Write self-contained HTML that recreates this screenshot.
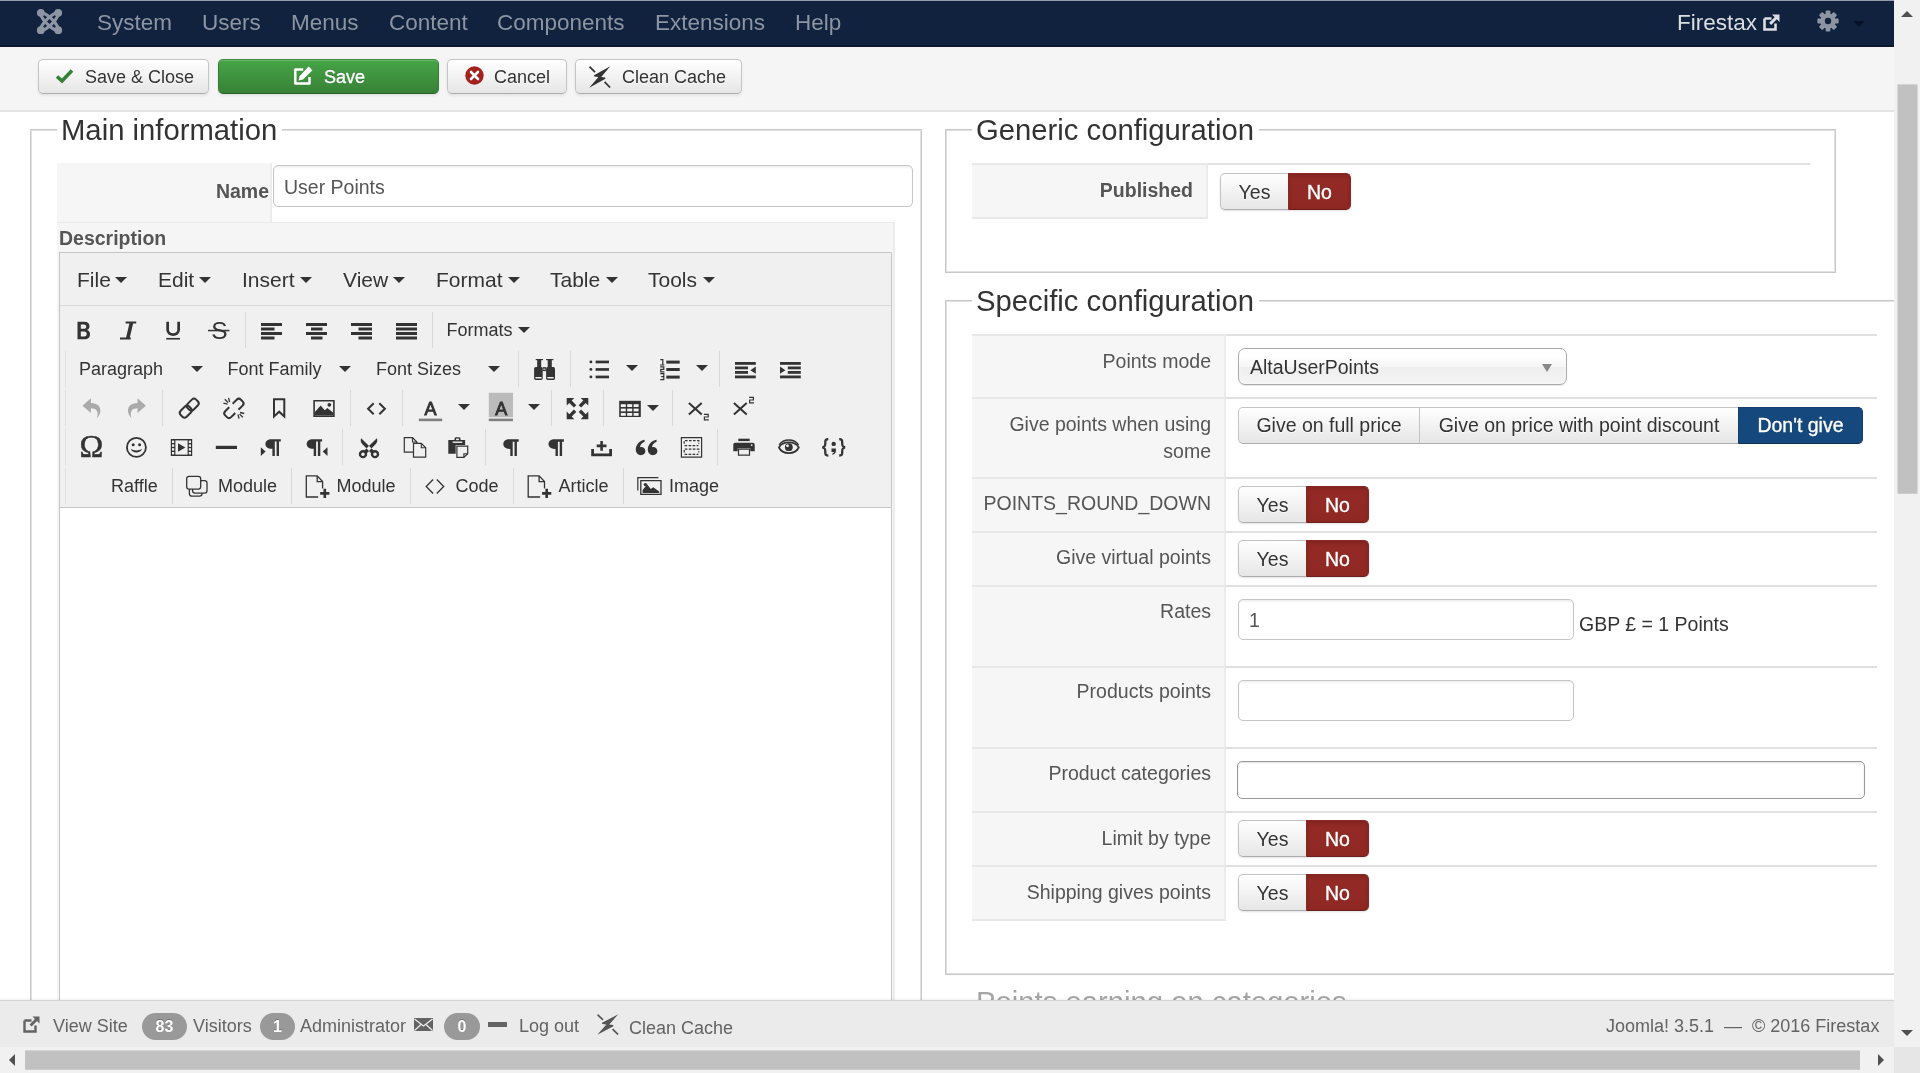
<!DOCTYPE html>
<html lang="en"><head><meta charset="utf-8"><title>User Points</title>
<style>
html,body{margin:0;padding:0;}
body{width:1920px;height:1073px;overflow:hidden;background:#fff;font-family:"Liberation Sans",sans-serif;font-size:19.5px;line-height:27px;color:#333;position:relative;}
*{box-sizing:border-box;}
.abs{position:absolute;}
#page{position:absolute;left:0;top:0;width:1894px;height:1047px;overflow:hidden;background:#fff;will-change:transform;}
#nav{position:absolute;left:0;top:0;width:1894px;height:47px;background:#10223e;border-top:1px solid #959dab;border-bottom:2px solid #0b1830;}
#nav .mi{position:absolute;top:8px;font-size:22.5px;line-height:27px;color:#8d94a2;white-space:nowrap;}
#nav .brand{position:absolute;top:8px;left:1677px;font-size:22.5px;line-height:27px;color:#dcdee2;white-space:nowrap;}
#tb{position:absolute;left:0;top:47px;width:1894px;height:65px;background:#f5f5f5;border-bottom:2px solid #e4e4e4;}
.btn{position:absolute;border:1px solid #bbb;border-color:#c4c4c4 #c4c4c4 #adadad;border-radius:5px;background:linear-gradient(#ffffff,#e6e6e6);box-shadow:inset 0 1px 0 rgba(255,255,255,.2),0 1.5px 3px rgba(0,0,0,.07);color:#333;text-shadow:0 1px 1px rgba(255,255,255,.75);white-space:nowrap;}
.btn-s{font-size:18px;line-height:27px;height:35px;top:12px;}
.btn .t{position:absolute;top:4px;}
.btn-green{background:linear-gradient(#46a546,#378137);border-color:#3d8b3d #357a35 #2a5f2a;color:#fff;text-shadow:0 -1px 0 rgba(0,0,0,.25);-webkit-text-stroke:0.35px #fff;}
.fs{position:absolute;border:1px solid #c8c8c8;box-shadow:inset 0 0 0 1px #e2e2e2;}
.lg{position:absolute;background:#fff;font-size:29.25px;line-height:36px;color:#333;white-space:nowrap;padding:0 5px 0 4px;}
.lab{position:absolute;background:#f6f6f6;border-right:2px solid #ececec;border-top:2px solid #e8e8e8;color:#555;text-align:right;}
.lab span{position:absolute;right:13px;display:block;}
.hl{position:absolute;height:2px;background:#e0e0e0;}
.yn{position:absolute;height:37px;width:131px;border-radius:5px;box-shadow:0 1px 2px rgba(0,0,0,.12);}
.yn .y,.yn .n,.seg{position:absolute;top:0;height:37px;font-size:19.5px;line-height:36px;text-align:center;border:1px solid #c4c4c4;white-space:nowrap;}
.yn .y{left:0;width:69px;border-radius:5px 0 0 5px;background:linear-gradient(#ffffff,#e6e6e6);border-color:#c4c4c4 #c4c4c4 #adadad;color:#333;text-shadow:0 1px 1px rgba(255,255,255,.75);}
.yn .n{left:68px;width:63px;border-radius:0 5px 5px 0;background:linear-gradient(#942a25,#8f2823);border-color:#8a2722 #8a2722 #6d1f1b;color:#fff;text-shadow:0 -1px 0 rgba(0,0,0,.25);box-shadow:inset 0 2px 4px rgba(0,0,0,.15);-webkit-text-stroke:0.35px #fff;}
.inp{position:absolute;background:#fff;border:1px solid #c6c6c6;border-radius:5px;box-shadow:inset 0 1.5px 1.5px rgba(0,0,0,.075);color:#555;}
.ed{position:absolute;background:#f0f0f0;border:1px solid #c5c5c5;}
.ed .m{position:absolute;font-size:21px;line-height:24px;color:#333;white-space:nowrap;}
.car{position:absolute;width:0;height:0;border-left:6px solid transparent;border-right:6px solid transparent;border-top:6.5px solid #333;}
.sep{position:absolute;width:1px;height:36px;background:#d9d9d9;}
.tt{position:absolute;font-size:18px;line-height:24px;color:#333;white-space:nowrap;}
.gl{position:absolute;color:#333;white-space:nowrap;text-align:center;width:30px;}
#st{position:absolute;left:0;top:1000px;width:1894px;height:47px;background:#ebebeb;border-top:1px solid #d4d4d4;color:#636363;font-size:18px;box-shadow:0 -1px 2px rgba(0,0,0,.06);}
#st .s{position:absolute;top:12px;line-height:27px;white-space:nowrap;}
.badge{position:absolute;top:12px;height:27px;border-radius:13.5px;background:#999;color:#fff;font-weight:bold;font-size:16px;line-height:27px;text-align:center;text-shadow:0 -1px 0 rgba(0,0,0,.25);}
</style></head><body>
<div id="page">
<div id="nav"><svg class="abs" style="left:35px;top:5.6px" width="29" height="29" viewBox="-14.5 -14.5 29 29"><g fill="none" stroke="#8d95a3" stroke-width="3"><ellipse rx="11.4" ry="3.3" transform="rotate(45)"/><ellipse rx="11.4" ry="3.3" transform="rotate(-45)"/></g><g fill="#8d95a3"><circle cx="-8.7" cy="-8.7" r="3.9"/><circle cx="8.7" cy="-8.7" r="3.9"/><circle cx="-8.7" cy="8.7" r="3.9"/><circle cx="8.7" cy="8.7" r="3.9"/></g></svg><div class="mi" style="left:97px">System</div><div class="mi" style="left:202px">Users</div><div class="mi" style="left:291px">Menus</div><div class="mi" style="left:389px">Content</div><div class="mi" style="left:497px">Components</div><div class="mi" style="left:655px">Extensions</div><div class="mi" style="left:795px">Help</div><div class="brand">Firestax</div><svg class="abs" style="left:1763px;top:13px" width="17" height="17" viewBox="0 0 17 17"><path d="M1.5 4.5 H8.5 M1.5 4.5 V15.5 H12.5 V9.5" fill="none" stroke="#dcdee2" stroke-width="2.6"/><path d="M9 0.5 H16.5 V8 L13.8 5.3 L8.2 10.9 L6.1 8.8 L11.7 3.2 Z" fill="#dcdee2"/></svg><svg class="abs" style="left:1817px;top:9px" width="22" height="22" viewBox="0 0 22 22"><g fill="#8d95a3"><circle cx="11" cy="11" r="7.6"/><rect x="8.6" y="0.4" width="4.8" height="6" rx="1" transform="rotate(0 11 11)"/><rect x="8.6" y="0.4" width="4.8" height="6" rx="1" transform="rotate(45 11 11)"/><rect x="8.6" y="0.4" width="4.8" height="6" rx="1" transform="rotate(90 11 11)"/><rect x="8.6" y="0.4" width="4.8" height="6" rx="1" transform="rotate(135 11 11)"/><rect x="8.6" y="0.4" width="4.8" height="6" rx="1" transform="rotate(180 11 11)"/><rect x="8.6" y="0.4" width="4.8" height="6" rx="1" transform="rotate(225 11 11)"/><rect x="8.6" y="0.4" width="4.8" height="6" rx="1" transform="rotate(270 11 11)"/><rect x="8.6" y="0.4" width="4.8" height="6" rx="1" transform="rotate(315 11 11)"/></g><circle cx="11" cy="11" r="3.2" fill="#10223e"/></svg><div class="car" style="left:1853px;top:20px;border-top-color:#081227;"></div></div>
<div id="tb"><div class="btn btn-s" style="left:38px;width:171px"><svg class="abs" style="left:16px;top:8px" width="19" height="16" viewBox="0 0 19 16"><path d="M2 8.5 L7 13 L17 2.5" fill="none" stroke="#378137" stroke-width="3.6"/></svg><span class="t" style="left:46px">Save &amp; Close</span></div><div class="btn btn-s btn-green" style="left:218px;width:221px"><svg class="abs" style="left:75px;top:6px" width="19" height="19" viewBox="0 0 19 19"><path d="M9.2 3.6 H1.3 V17.6 H15.5 V11" fill="none" stroke="#fff" stroke-width="2.5" stroke-linejoin="round"/><path d="M14.6 0.4 L18.4 4.2 L9 13.6 L4.6 14.6 L5.6 10.2 Z" fill="#fff"/></svg><span class="t" style="left:105px">Save</span></div><div class="btn btn-s" style="left:447px;width:120px"><svg class="abs" style="left:17px;top:6px" width="19" height="19" viewBox="0 0 19 19"><circle cx="9.5" cy="9.5" r="9.2" fill="#a3201d"/><path d="M6 6 L13 13 M13 6 L6 13" stroke="#fff" stroke-width="2.6" stroke-linecap="round"/></svg><span class="t" style="left:46px">Cancel</span></div><div class="btn btn-s" style="left:575px;width:167px"><svg class="abs" style="left:12.8px;top:5.9px" width="22" height="22" viewBox="0 0 22 22"><path d="M21.3 0.3 L5 9.2 L5.2 10.6 L9.4 11 L0.3 21.7 L16.4 12.8 L16.2 11.4 L12.2 10.9 Z" fill="#333"/><path d="M0.5 0.7 L6 6.2 M15.6 15.8 L21.1 21.5" stroke="#333" stroke-width="1.7"/></svg><span class="t" style="left:46px">Clean Cache</span></div></div>
<div class="fs" style="left:30px;top:129px;width:892px;height:950px"></div><div class="lg" style="left:57px;top:112px">Main information</div><div class="lab" style="left:57px;top:163px;width:215px;height:60px;font-weight:bold;border-top:none"><span style="top:15px;right:1px">Name</span></div><div class="inp" style="left:273px;top:165px;width:640px;height:42px"><span class="abs" style="left:10px;top:8px;line-height:27px">User Points</span></div><div class="abs" style="left:57px;top:222px;width:838px;height:780px;background:#f5f5f5;border-top:1px solid #e9e9e9;border-right:2px solid #ececec"></div><div class="abs" style="left:59px;top:225px;font-weight:bold;color:#555;line-height:27px">Description</div><div class="ed" style="left:59px;top:252px;width:833px;height:760px"><div class="abs" style="left:0;top:52px;width:831px;height:1px;background:#d9d9d9"></div><div class="abs" style="left:0;top:254px;width:831px;height:600px;background:#fff;border-top:1px solid #c5c5c5"></div><div class="m" style="left:17px;top:15px">File</div><div class="car" style="left:55px;top:24px"></div><div class="m" style="left:98px;top:15px">Edit</div><div class="car" style="left:139px;top:24px"></div><div class="m" style="left:182px;top:15px">Insert</div><div class="car" style="left:240px;top:24px"></div><div class="m" style="left:283px;top:15px">View</div><div class="car" style="left:333px;top:24px"></div><div class="m" style="left:376px;top:15px">Format</div><div class="car" style="left:448px;top:24px"></div><div class="m" style="left:490px;top:15px">Table</div><div class="car" style="left:546px;top:24px"></div><div class="m" style="left:588px;top:15px">Tools</div><div class="car" style="left:643px;top:24px"></div><div class="sep" style="left:185px;top:59px;background:#d9d9d9"></div><div class="sep" style="left:372px;top:59px;background:#d9d9d9"></div><div class="gl" style="left:144.5px;top:64px;font-size:24.5px;line-height:28px">S</div><div class="tt" style="left:386.5px;top:64.5px">Formats</div><div class="car" style="left:457.7px;top:74px"></div><div class="sep" style="left:5px;top:98px;background:#e2e2e2"></div><div class="tt" style="left:19px;top:103.5px">Paragraph</div><div class="car" style="left:130.6px;top:113px"></div><div class="tt" style="left:167.5px;top:103.5px">Font Family</div><div class="car" style="left:279.2px;top:113px"></div><div class="tt" style="left:316px;top:103.5px">Font Sizes</div><div class="car" style="left:427.5px;top:113px"></div><div class="sep" style="left:458px;top:98px;background:#d9d9d9"></div><div class="sep" style="left:510px;top:98px;background:#d9d9d9"></div><div class="car" style="left:566px;top:112px"></div><div class="car" style="left:636.3px;top:112px"></div><div class="sep" style="left:659px;top:98px;background:#d9d9d9"></div><div class="sep" style="left:5px;top:137px;background:#e2e2e2"></div><div class="sep" style="left:102px;top:137px;background:#d9d9d9"></div><div class="sep" style="left:290px;top:137px;background:#d9d9d9"></div><div class="sep" style="left:342px;top:137px;background:#d9d9d9"></div><div class="sep" style="left:491px;top:137px;background:#d9d9d9"></div><div class="sep" style="left:543px;top:137px;background:#d9d9d9"></div><div class="sep" style="left:612px;top:137px;background:#d9d9d9"></div><div class="gl" style="left:355.6px;top:143.5px;font-size:18px;line-height:24px;-webkit-text-stroke:0.9px #333">A</div><div class="car" style="left:397.7px;top:151px"></div><div class="car" style="left:468px;top:151px"></div><div class="car" style="left:586.7px;top:152px"></div><div class="sep" style="left:5px;top:176px;background:#e2e2e2"></div><div class="sep" style="left:282px;top:176px;background:#d9d9d9"></div><div class="sep" style="left:425px;top:176px;background:#d9d9d9"></div><div class="sep" style="left:657px;top:176px;background:#d9d9d9"></div><div class="gl" style="left:16.5px;top:178px;font-family:'Liberation Serif',serif;font-size:32px;line-height:30px;-webkit-text-stroke:0.5px #333">Ω</div><div class="sep" style="left:5px;top:215px;background:#e2e2e2"></div><div class="sep" style="left:112px;top:215px;background:#d9d9d9"></div><div class="sep" style="left:231px;top:215px;background:#d9d9d9"></div><div class="sep" style="left:350px;top:215px;background:#d9d9d9"></div><div class="sep" style="left:453px;top:215px;background:#d9d9d9"></div><div class="sep" style="left:563px;top:215px;background:#d9d9d9"></div><div class="tt" style="left:51px;top:220.5px">Raffle</div><div class="tt" style="left:158px;top:220.5px">Module</div><div class="tt" style="left:276.5px;top:220.5px">Module</div><div class="tt" style="left:395.5px;top:220.5px">Code</div><div class="tt" style="left:498.5px;top:220.5px">Article</div><div class="tt" style="left:609px;top:220.5px">Image</div><svg class="abs" style="left:-60px;top:-253px;overflow:visible" width="894" height="520" viewBox="0 0 894 520"><g transform="translate(77.5 321.75)"><path d="M0 0 H7 C10.4 0 12 2 12 4.5 C12 6.4 11 7.7 9.4 8.3 C11.4 8.8 12.5 10.4 12.5 12.5 C12.5 15.5 10.5 17.5 7 17.5 H0 Z M3.3 2.8 V7 H6.4 C7.9 7 8.7 6.2 8.7 4.9 C8.7 3.6 7.9 2.8 6.4 2.8 Z M3.3 9.8 V14.7 H6.8 C8.4 14.7 9.2 13.8 9.2 12.2 C9.2 10.7 8.4 9.8 6.8 9.8 Z" fill="#333" fill-rule="evenodd"/></g><g transform="translate(120 321.5)"><path d="M5.6 0 H16.25 V2 H13.1 L9.8 16 H10.75 V18 H0 V16 H6.1 L9.4 2 H5.6 Z" fill="#333"/></g><g transform="translate(166.25 321.75)"><path d="M1.4 0 V8 C1.4 14.4 12.4 14.4 12.4 8 V0" fill="none" stroke="#333" stroke-width="2.7"/><rect x="0" y="16.2" width="13.75" height="1.6" fill="#333"/></g><rect x="208" y="329.8" width="21.4" height="1.5" fill="#333"/><rect x="261" y="323" width="21" height="3" fill="#333"/><rect x="261" y="327.5" width="13.5" height="3" fill="#333"/><rect x="261" y="332" width="21" height="3" fill="#333"/><rect x="261" y="336.5" width="13.5" height="3" fill="#333"/><rect x="306" y="323" width="21" height="3" fill="#333"/><rect x="311" y="327.5" width="11.5" height="3" fill="#333"/><rect x="306" y="332" width="21" height="3" fill="#333"/><rect x="311" y="336.5" width="11.5" height="3" fill="#333"/><rect x="351" y="323" width="21" height="3" fill="#333"/><rect x="358.5" y="327.5" width="13.5" height="3" fill="#333"/><rect x="351" y="332" width="21" height="3" fill="#333"/><rect x="358.5" y="336.5" width="13.5" height="3" fill="#333"/><rect x="396" y="323" width="21" height="3" fill="#333"/><rect x="396" y="327.5" width="21" height="3" fill="#333"/><rect x="396" y="332" width="21" height="3" fill="#333"/><rect x="396" y="336.5" width="21" height="3" fill="#333"/><g transform="translate(533.8 359)"><rect x="1.9" y="0" width="7.3" height="1.2" fill="#333"/><rect x="12.3" y="0" width="7.3" height="1.2" fill="#333"/><rect x="3.4" y="1" width="4" height="7.6" fill="#333"/><rect x="13.9" y="1" width="4.1" height="7.6" fill="#333"/><rect x="0.3" y="8.1" width="8.6" height="12.8" rx="1.6" fill="#333"/><rect x="12.3" y="8.1" width="8.9" height="12.8" rx="1.6" fill="#333"/><rect x="8.8" y="8.2" width="3.6" height="3.9" fill="#333"/><rect x="9.5" y="9.6" width="2.2" height="1.2" fill="#ccc"/><rect x="1.4" y="18" width="6.6" height="1.6" rx="0.8" fill="#f0f0f0"/><rect x="13.4" y="18" width="6.7" height="1.6" rx="0.8" fill="#f0f0f0"/></g><circle cx="590.9" cy="361.90000000000003" r="1.45" fill="#333"/><rect x="595.6" y="360.6" width="13.4" height="2.7" fill="#333"/><circle cx="590.9" cy="369.40000000000003" r="1.45" fill="#333"/><rect x="595.6" y="368.1" width="13.4" height="2.7" fill="#333"/><circle cx="590.9" cy="376.90000000000003" r="1.45" fill="#333"/><rect x="595.6" y="375.6" width="13.4" height="2.7" fill="#333"/><rect x="666.3" y="360.6" width="13.4" height="3" fill="#333"/><rect x="666.3" y="368" width="13.4" height="3" fill="#333"/><rect x="666.3" y="375.6" width="13.4" height="3" fill="#333"/><g transform="translate(660 359)"><path d="M0.3 0.7 H2.8 V6 M0 6 H4.4" fill="none" stroke="#333" stroke-width="1.2"/><path d="M0.2 7.8 H3.8 V10.3 H0.8 V12.8 H4.4" fill="none" stroke="#333" stroke-width="1.2"/><path d="M0.2 14.6 H3.8 V20.6 H0.2 M1.2 17.6 H3.8" fill="none" stroke="#333" stroke-width="1.2"/></g><rect x="735" y="362" width="20.8" height="2.8" fill="#333"/><rect x="735" y="366.5" width="13" height="2.8" fill="#333"/><rect x="735" y="371" width="13" height="2.8" fill="#333"/><rect x="735" y="375.5" width="20.8" height="2.8" fill="#333"/><path d="M755.8 366.6 V373.8 L750.4 370.2 Z" fill="#333"/><rect x="780" y="362" width="20.8" height="2.8" fill="#333"/><rect x="787.8" y="366.5" width="13" height="2.8" fill="#333"/><rect x="787.8" y="371" width="13" height="2.8" fill="#333"/><rect x="780" y="375.5" width="20.8" height="2.8" fill="#333"/><path d="M780 366.6 V373.8 L785.4 370.2 Z" fill="#333"/><g transform="translate(82.5 398.3)"><path d="M8.4 0 V4.6 C15 4.6 18.6 8.2 17.8 13.4 C17.4 16 16 18.4 14 20 C15.4 17.4 15.6 14.6 14.4 12.6 C13.2 10.6 11 10 8.4 10 V14.8 L0 7.4 Z" fill="#aaa"/></g><g transform="translate(145.9 398.3)"><g transform="scale(-1 1)"><path d="M8.4 0 V4.6 C15 4.6 18.6 8.2 17.8 13.4 C17.4 16 16 18.4 14 20 C15.4 17.4 15.6 14.6 14.4 12.6 C13.2 10.6 11 10 8.4 10 V14.8 L0 7.4 Z" fill="#aaa"/></g></g><g transform="translate(178.3 397.5)"><g fill="none" stroke="#333" stroke-width="2"><rect x="-4.2" y="-6" width="8.4" height="12" rx="3" transform="translate(14.4 7.2) rotate(45)"/><rect x="-4.2" y="-6" width="8.4" height="12" rx="3" transform="translate(7.5 14.1) rotate(45)"/></g></g><g transform="translate(223 397.5)"><g fill="none" stroke="#333" stroke-width="2"><rect x="-4.2" y="-5.6" width="8.4" height="11.2" rx="3" transform="translate(14.8 7) rotate(45)"/><rect x="-4.2" y="-5.6" width="8.4" height="11.2" rx="3" transform="translate(7 14.8) rotate(45)"/></g><rect x="-7" y="-2.4" width="14" height="4.8" fill="#f0f0f0" transform="translate(10.9 10.9) rotate(45)"/><path d="M0.4 5.6 L4.6 6.6 M5.6 0.4 L6.6 4.6 M1.8 1.8 L5 5 M21.2 16 L17 15 M16 21.2 L15 17 M19.8 19.8 L16.6 16.6" fill="none" stroke="#333" stroke-width="1.3"/></g><g transform="translate(273 398.3)"><path d="M1 1 H11.3 V18.2 L6.15 13.4 L1 18.2 Z" fill="none" stroke="#333" stroke-width="2"/></g><g transform="translate(313.3 400)"><path d="M0.8 0.8 H20.6 V16.2 H0.8 Z" fill="none" stroke="#333" stroke-width="1.6"/><path d="M1.6 15.6 V12 L7.4 5.6 L11.4 10.2 L14 8 L19.8 12.6 V15.6 Z" fill="#333"/><circle cx="16" cy="4.8" r="1.9" fill="#333"/></g><g transform="translate(366.7 402.5)"><path d="M7 0.8 L1.4 6.25 L7 11.7 M12.6 0.8 L18.2 6.25 L12.6 11.7" fill="none" stroke="#333" stroke-width="2"/></g><rect x="418.8" y="418.6" width="23.4" height="2.6" fill="#808080"/><rect x="488.8" y="392.8" width="24.2" height="24.4" fill="#bbb"/><rect x="488.8" y="418.6" width="24.2" height="2.6" fill="#808080"/><g transform="translate(566.7 398)"><path d="M0 0 H7.6 L5 2.6 L9.6 7.2 L7.2 9.6 L2.6 5 L0 7.6 Z" fill="#333"/><g transform="translate(21.6 0) scale(-1 1)"><path d="M0 0 H7.6 L5 2.6 L9.6 7.2 L7.2 9.6 L2.6 5 L0 7.6 Z" fill="#333"/></g><g transform="translate(0 21.2) scale(1 -1)"><path d="M0 0 H7.6 L5 2.6 L9.6 7.2 L7.2 9.6 L2.6 5 L0 7.6 Z" fill="#333"/></g><g transform="translate(21.6 21.2) scale(-1 -1)"><path d="M0 0 H7.6 L5 2.6 L9.6 7.2 L7.2 9.6 L2.6 5 L0 7.6 Z" fill="#333"/></g></g><g transform="translate(619.2 400.8)"><rect x="0" y="0" width="21.6" height="16.2" fill="#333"/><rect x="1.6" y="3.4" width="5" height="2.8" fill="#f0f0f0"/><rect x="1.6" y="7.800000000000001" width="5" height="2.8" fill="#f0f0f0"/><rect x="1.6" y="12.200000000000001" width="5" height="2.8" fill="#f0f0f0"/><rect x="8.0" y="3.4" width="5" height="2.8" fill="#f0f0f0"/><rect x="8.0" y="7.800000000000001" width="5" height="2.8" fill="#f0f0f0"/><rect x="8.0" y="12.200000000000001" width="5" height="2.8" fill="#f0f0f0"/><rect x="14.4" y="3.4" width="5" height="2.8" fill="#f0f0f0"/><rect x="14.4" y="7.800000000000001" width="5" height="2.8" fill="#f0f0f0"/><rect x="14.4" y="12.200000000000001" width="5" height="2.8" fill="#f0f0f0"/></g><g transform="translate(688.3 402.5)"><path d="M0.6 0.4 L13.4 12 M13.4 0.4 L0.6 12" fill="none" stroke="#333" stroke-width="2"/></g><g transform="translate(703.6 413.7)"><path d="M0.3 0.6 H4.6 V3.3 H0.8 V6.2 H5.2" fill="none" stroke="#333" stroke-width="1.2"/></g><g transform="translate(733.3 402.5)"><path d="M0.6 0.4 L13.4 12 M13.4 0.4 L0.6 12" fill="none" stroke="#333" stroke-width="2"/></g><g transform="translate(748.8 396.7)"><path d="M0.3 0.6 H4.6 V3.3 H0.8 V6.2 H5.2" fill="none" stroke="#333" stroke-width="1.2"/></g><g transform="translate(125.8 437)"><circle cx="10.6" cy="10.4" r="9.5" fill="none" stroke="#333" stroke-width="1.8"/><circle cx="7.4" cy="7.8" r="1.5" fill="#333"/><circle cx="13.8" cy="7.8" r="1.5" fill="#333"/><path d="M5 11.8 C6.2 16.8 15 16.8 16.2 11.8 C13.4 14 7.8 14 5 11.8 Z" fill="#333"/></g><g transform="translate(170.8 439)"><rect x="0" y="0" width="21.4" height="17" fill="#333"/><rect x="4.6" y="1.4" width="12.2" height="14.2" fill="#f0f0f0"/><rect x="1.2" y="1.6" width="2.2" height="2.4" fill="#f0f0f0"/><rect x="1.2" y="5.4" width="2.2" height="2.4" fill="#f0f0f0"/><rect x="1.2" y="9.2" width="2.2" height="2.4" fill="#f0f0f0"/><rect x="1.2" y="13" width="2.2" height="2.4" fill="#f0f0f0"/><rect x="18" y="1.6" width="2.2" height="2.4" fill="#f0f0f0"/><rect x="18" y="5.4" width="2.2" height="2.4" fill="#f0f0f0"/><rect x="18" y="9.2" width="2.2" height="2.4" fill="#f0f0f0"/><rect x="18" y="13" width="2.2" height="2.4" fill="#f0f0f0"/><path d="M7.2 4.2 L14.6 8.5 L7.2 12.8 Z" fill="#333"/></g><rect x="215.8" y="445.8" width="21.2" height="3.2" fill="#333"/><g transform="translate(265.4 439.2)"><path d="M6.2 0 H15.4 V2.4 H13.6 V16.7 H11.2 V2.4 H9.4 V16.7 H7 V9.6 H6.2 C2.4 9.6 0 7.6 0 4.8 C0 2 2.4 0 6.2 0 Z" fill="#333"/></g><path d="M260.8 447.2 V456 L265.6 451.6 Z" fill="#333"/><g transform="translate(306.7 439.2)"><path d="M6.2 0 H15.4 V2.4 H13.6 V16.7 H11.2 V2.4 H9.4 V16.7 H7 V9.6 H6.2 C2.4 9.6 0 7.6 0 4.8 C0 2 2.4 0 6.2 0 Z" fill="#333"/></g><path d="M327.5 447.2 V456 L322.7 451.6 Z" fill="#333"/><g transform="translate(358.8 438.2)"><g fill="none" stroke="#333" stroke-width="2.4"><ellipse cx="4.2" cy="16" rx="3" ry="2.9"/><ellipse cx="16.2" cy="16" rx="3" ry="2.9"/></g><path d="M2.4 0 C1.4 2.2 2 4.2 3.4 5.8 L12.6 15.2 L15.6 13 Z M18 0 C19 2.2 18.4 4.2 17 5.8 L7.8 15.2 L4.8 13 Z" fill="#333"/><circle cx="10.2" cy="10.4" r="1" fill="#f0f0f0"/></g><g transform="translate(403.7 437)"><path d="M0.6 0.6 H8.8 L13.2 5 V15.2 H0.6 Z" fill="#f0f0f0" stroke="#333" stroke-width="1.2"/><path d="M8.8 0.6 V5 H13.2" fill="none" stroke="#333" stroke-width="1.1"/><path d="M9.8 6.4 H17.6 L22 10.8 V20.2 H9.8 Z" fill="#f0f0f0" stroke="#333" stroke-width="1.2"/><path d="M17.6 6.4 V10.8 H22" fill="none" stroke="#333" stroke-width="1.1"/></g><g transform="translate(448.3 437.3)"><path d="M7.6 0 H10.8 C11.8 0 12.2 0.8 12.2 1.6 V2.6 H16.8 V7.6 H7.4 V16.4 H0 V2.6 H6.2 V1.6 C6.2 0.8 6.6 0 7.6 0 Z" fill="#333"/><rect x="7.8" y="1.3" width="2.8" height="1.5" fill="#f0f0f0"/><rect x="4.4" y="4.2" width="9.6" height="1.4" fill="#f0f0f0"/><path d="M8.6 8.8 H19.4 V16.4 L15.6 20 H8.6 Z" fill="#f0f0f0" stroke="#333" stroke-width="1.2"/><path d="M19.4 16.4 H15.6 V20" fill="none" stroke="#333" stroke-width="1.1"/></g><g transform="translate(503.3 439.3)"><path d="M6.2 0 H15.4 V2.4 H13.6 V16.7 H11.2 V2.4 H9.4 V16.7 H7 V9.6 H6.2 C2.4 9.6 0 7.6 0 4.8 C0 2 2.4 0 6.2 0 Z" fill="#333"/></g><g transform="translate(548.5 439.3)"><path d="M6.2 0 H15.4 V2.4 H13.6 V16.7 H11.2 V2.4 H9.4 V16.7 H7 V9.6 H6.2 C2.4 9.6 0 7.6 0 4.8 C0 2 2.4 0 6.2 0 Z" fill="#333"/></g><g transform="translate(591.2 441)"><path d="M1.4 8 V13.8 H19.4 V8" fill="none" stroke="#333" stroke-width="2.8"/><path d="M10.4 0 V9.8 M5.5 4.9 H15.3" fill="none" stroke="#333" stroke-width="2.6"/></g><g transform="translate(635.8 439.8)"><path d="M8.8 0 V2 C6 3 4.4 5 4.2 7.4 C4.6 7.2 5 7.2 5.4 7.2 C7.8 7.2 9.6 8.9 9.6 11.3 C9.6 13.7 7.7 15.4 5.2 15.4 C2.2 15.4 0 13.2 0 9.8 C0 5 3.4 1.2 8.8 0 Z" fill="#333"/><g transform="translate(12 0)"><path d="M8.8 0 V2 C6 3 4.4 5 4.2 7.4 C4.6 7.2 5 7.2 5.4 7.2 C7.8 7.2 9.6 8.9 9.6 11.3 C9.6 13.7 7.7 15.4 5.2 15.4 C2.2 15.4 0 13.2 0 9.8 C0 5 3.4 1.2 8.8 0 Z" fill="#333"/></g></g><g transform="translate(680.8 437)"><path d="M0.6 0.6 H20.8 V20.2 H0.6 Z" fill="none" stroke="#333" stroke-width="1.2"/><g fill="none" stroke="#333" stroke-width="1.2" stroke-dasharray="2.6 1.4"><path d="M3.4 6.8 V3.6 H18 V6.8"/><path d="M3.8 8.6 H17.6"/><path d="M3.4 15.6 V12.2 H18 V15.6"/><path d="M3.8 17.4 H17.6"/></g></g><g transform="translate(733.3 438.7)"><rect x="5" y="0" width="11.4" height="2.4" fill="#333"/><path d="M2 4 H19.4 C20.6 4 21.4 4.8 21.4 6 V12.6 H17 V9.6 H4.4 V12.6 H0 V6 C0 4.8 0.8 4 2 4 Z" fill="#333"/><path d="M5.2 10.4 H16.2 V16.4 H5.2 Z" fill="#f0f0f0" stroke="#333" stroke-width="1.2"/><circle cx="18.4" cy="6.4" r="0.9" fill="#f0f0f0"/></g><g transform="translate(778 439.3)"><path d="M0.9 8.2 C4.6 1.4 17.1 1.4 20.8 8.2 C17.1 15.6 4.6 15.6 0.9 8.2 Z" fill="none" stroke="#333" stroke-width="1.7"/><path d="M1.2 5.6 C5.4 -1 16.3 -1 20.5 5.6" fill="none" stroke="#333" stroke-width="1.5"/><circle cx="10.85" cy="7.9" r="3.9" fill="#333"/><circle cx="9.5" cy="6.5" r="1.4" fill="#f0f0f0"/></g><g transform="translate(821.7 438.2)"><path d="M6.6 1 C3.4 1 3.6 2.6 3.6 4.6 C3.6 7 3.8 8.4 0.8 9.15 C3.8 9.9 3.6 11.3 3.6 13.7 C3.6 15.7 3.4 17.3 6.6 17.3 M17.5 1 C20.7 1 20.5 2.6 20.5 4.6 C20.5 7 20.3 8.4 23.3 9.15 C20.3 9.9 20.5 11.3 20.5 13.7 C20.5 15.7 20.7 17.3 17.5 17.3" fill="none" stroke="#333" stroke-width="2.3"/><circle cx="12" cy="5.7" r="2.2" fill="#333"/><path d="M9.8 10.2 H14.2 V12.6 C14.2 14.8 13 16.2 10.6 16.6 V15.2 C11.8 14.9 12.2 14.4 12.2 13.8 H9.8 Z" fill="#333"/></g><g transform="translate(186 475.75)"><g fill="#f0f0f0" stroke="#333" stroke-width="1.3"><rect x="3.4" y="8" width="12.6" height="12.4" rx="2.4"/><rect x="6.6" y="4.8" width="14.4" height="12.6" rx="2.4"/><rect x="0.7" y="0.7" width="14" height="12.6" rx="2.4"/></g></g><g transform="translate(305.6 475.2)"><path d="M17 13.4 V6.4 L11.6 0.7 H0.7 V21.8 H12.6 M11.6 0.7 V6.4 H17" fill="none" stroke="#333" stroke-width="1.3"/><path d="M19.2 13.6 V22.8 M14.6 18.2 H23.8" fill="none" stroke="#333" stroke-width="2.6"/></g><g transform="translate(527.5 475.2)"><path d="M17 13.4 V6.4 L11.6 0.7 H0.7 V21.8 H12.6 M11.6 0.7 V6.4 H17" fill="none" stroke="#333" stroke-width="1.3"/><path d="M19.2 13.6 V22.8 M14.6 18.2 H23.8" fill="none" stroke="#333" stroke-width="2.6"/></g><g transform="translate(425.3 479)"><path d="M7.8 0.5 L0.9 7.5 L7.8 14.5 M11.5 0.5 L18.4 7.5 L11.5 14.5" fill="none" stroke="#333" stroke-width="1.3"/></g><g transform="translate(637.2 477)"><path d="M0.6 13.6 V0.6 H21.2" fill="none" stroke="#333" stroke-width="1.2"/><path d="M3.6 3.6 H23.8 V17.3 H3.6 Z" fill="none" stroke="#333" stroke-width="1.3"/><path d="M5.4 16 V13 L10 7.6 L13.6 12 L16 10.2 L22 14.6 V16 Z" fill="#333"/><circle cx="8.2" cy="7.6" r="1.7" fill="#333"/></g></svg><div class="gl" style="left:426.2px;top:143.5px;font-size:18px;line-height:24px;-webkit-text-stroke:0.9px #333">A</div></div>
<div class="fs" style="left:945px;top:129px;width:891px;height:144px"></div><div class="lg" style="left:972px;top:112px">Generic configuration</div><div class="hl" style="left:972px;top:163px;width:838px"></div><div class="lab" style="left:972px;top:163px;width:236px;height:56px;font-weight:bold;border-bottom:2px solid #e8e8e8"><span style="top:12px">Published</span></div><div class="yn" style="left:1220px;top:173px"><div class="y">Yes</div><div class="n">No</div></div><div class="fs" style="left:945px;top:300px;width:1000px;height:675px"></div><div class="lg" style="left:972px;top:283px">Specific configuration</div><div class="hl" style="left:972px;top:334px;width:905px"></div><div class="lab" style="left:972px;top:334px;width:254px;height:65px;border-bottom:2px solid #e8e8e8"><span style="top:12px">Points mode</span></div><div class="hl" style="left:972px;top:397px;width:905px"></div><div class="lab" style="left:972px;top:397px;width:254px;height:82px;border-bottom:2px solid #e8e8e8"><span style="top:12px">Give points when using<br>some</span></div><div class="hl" style="left:972px;top:477px;width:905px"></div><div class="lab" style="left:972px;top:477px;width:254px;height:56px;border-bottom:2px solid #e8e8e8"><span style="top:11px">POINTS_ROUND_DOWN</span></div><div class="hl" style="left:972px;top:531px;width:905px"></div><div class="lab" style="left:972px;top:531px;width:254px;height:56px;border-bottom:2px solid #e8e8e8"><span style="top:11px">Give virtual points</span></div><div class="hl" style="left:972px;top:585px;width:905px"></div><div class="lab" style="left:972px;top:585px;width:254px;height:83px;border-bottom:2px solid #e8e8e8"><span style="top:11px">Rates</span></div><div class="hl" style="left:972px;top:666px;width:905px"></div><div class="lab" style="left:972px;top:666px;width:254px;height:83px;border-bottom:2px solid #e8e8e8"><span style="top:10px">Products points</span></div><div class="hl" style="left:972px;top:747px;width:905px"></div><div class="lab" style="left:972px;top:747px;width:254px;height:66px;border-bottom:2px solid #e8e8e8"><span style="top:11px">Product categories</span></div><div class="hl" style="left:972px;top:811px;width:905px"></div><div class="lab" style="left:972px;top:811px;width:254px;height:56px;border-bottom:2px solid #e8e8e8"><span style="top:12px">Limit by type</span></div><div class="hl" style="left:972px;top:865px;width:905px"></div><div class="lab" style="left:972px;top:865px;width:254px;height:56px;border-bottom:2px solid #e8e8e8"><span style="top:12px">Shipping gives points</span></div><div class="abs" style="left:1238px;top:348px;width:329px;height:37px;border:1px solid #aaa;border-radius:7px;background:linear-gradient(#fff 20%,#f6f6f6 50%,#eee 52%,#f4f4f4);box-shadow:0 0 3px #fff inset,0 1px 1px rgba(0,0,0,.1)"><span class="abs" style="left:11px;top:5px;line-height:27px;color:#333">AltaUserPoints</span><span class="abs" style="left:303px;top:15px;width:0;height:0;border-left:5px solid transparent;border-right:5px solid transparent;border-top:8px solid #888"></span></div><div class="abs" style="left:1238px;top:407px;height:37px"><div class="seg" style="line-height:34px;left:0;width:182px;border-radius:5px 0 0 5px;background:linear-gradient(#fff,#e6e6e6);border-color:#c4c4c4 #c4c4c4 #adadad;text-shadow:0 1px 1px rgba(255,255,255,.75)">Give on full price</div><div class="seg" style="line-height:34px;left:181px;width:320px;background:linear-gradient(#fff,#e6e6e6);border-color:#c4c4c4 #c4c4c4 #adadad;text-shadow:0 1px 1px rgba(255,255,255,.75)">Give on price with point discount</div><div class="seg" style="line-height:34px;left:500px;width:125px;border-radius:0 5px 5px 0;background:#15497e;border-color:#123f6e #123f6e #0d2f52;color:#fff;text-shadow:0 -1px 0 rgba(0,0,0,.25);-webkit-text-stroke:0.35px #fff">Don't give</div></div><div class="yn" style="left:1238px;top:486px"><div class="y">Yes</div><div class="n">No</div></div><div class="yn" style="left:1238px;top:540px"><div class="y">Yes</div><div class="n">No</div></div><div class="inp" style="left:1238px;top:599px;width:336px;height:41px"><span class="abs" style="left:10px;top:7px;line-height:27px">1</span></div><div class="abs" style="left:1579px;top:611px;line-height:27px;color:#333;white-space:nowrap">GBP £ = 1 Points</div><div class="inp" style="left:1238px;top:680px;width:336px;height:41px"></div><div class="abs" style="left:1237px;top:761px;width:628px;height:38px;background:#fff;border:1px solid #999;border-radius:5px;box-shadow:inset 0 1px 2px rgba(0,0,0,.12)"></div><div class="yn" style="left:1238px;top:820px"><div class="y">Yes</div><div class="n">No</div></div><div class="yn" style="left:1238px;top:874px"><div class="y">Yes</div><div class="n">No</div></div><div class="lg" style="left:972px;top:984px;background:none;color:#a6a6a6">Points earning on categories</div><div id="st"><svg class="abs" style="left:23px;top:15px" width="17" height="17" viewBox="0 0 17 17"><path d="M1.5 4.5 H8.5 M1.5 4.5 V15.5 H12.5 V9.5" fill="none" stroke="#636363" stroke-width="2.4"/><path d="M9.5 0.5 H16.5 V7.5 L14 5 L8.6 10.4 L6.6 8.4 L12 3 Z" fill="#636363"/></svg><div class="s" style="left:53px">View Site</div><div class="badge" style="left:142px;width:45px">83</div><div class="s" style="left:193px">Visitors</div><div class="badge" style="left:260px;width:35px">1</div><div class="s" style="left:300px">Administrator</div><svg class="abs" style="left:414px;top:17px" width="19" height="13" viewBox="0 0 19 13"><rect width="19" height="13" fill="#636363"/><path d="M0.5 1 L9.5 8 L18.5 1 M0.5 12.5 L7 6.5 M18.5 12.5 L12 6.5" fill="none" stroke="#ebebeb" stroke-width="1.3"/></svg><div class="badge" style="left:444px;width:36px">0</div><div class="abs" style="left:488px;top:21px;width:19px;height:5px;background:#636363"></div><div class="s" style="left:519px">Log out</div><svg class="abs" style="left:596.7px;top:12.6px" width="22" height="21" viewBox="0 0 22 22" preserveAspectRatio="none"><path d="M21.3 0.3 L5 9.2 L5.2 10.6 L9.4 11 L0.3 21.7 L16.4 12.8 L16.2 11.4 L12.2 10.9 Z" fill="#555"/><path d="M0.5 0.7 L6 6.2 M15.6 15.8 L21.1 21.5" stroke="#555" stroke-width="1.7"/></svg><div class="s" style="left:629px;top:14px">Clean Cache</div><div class="s" style="left:1606px">Joomla! 3.5.1 &nbsp;—&nbsp; © 2016 Firestax</div></div>
</div>
<div class="abs" style="left:1894px;top:0;width:26px;height:1047px;background:#f1f1f1"><svg class="abs" style="left:0;top:0" width="26" height="1047"><rect x="3.5" y="84.4" width="20" height="409.4" fill="#c1c1c1"/></svg><div class="abs" style="left:7px;top:11px;width:0;height:0;border-left:6px solid transparent;border-right:6px solid transparent;border-bottom:6px solid #505050"></div><div class="abs" style="left:7px;top:1030px;width:0;height:0;border-left:6px solid transparent;border-right:6px solid transparent;border-top:6px solid #505050"></div></div><div class="abs" style="left:0;top:1047px;width:1894px;height:26px;background:#f1f1f1"><svg class="abs" style="left:0;top:0" width="1894" height="26"><rect x="25" y="3.4" width="1835" height="19.4" fill="#c1c1c1"/></svg><div class="abs" style="left:9px;top:7px;width:0;height:0;border-top:6px solid transparent;border-bottom:6px solid transparent;border-right:6px solid #505050"></div><div class="abs" style="left:1878px;top:7px;width:0;height:0;border-top:6px solid transparent;border-bottom:6px solid transparent;border-left:6px solid #505050"></div></div><div class="abs" style="left:1894px;top:1047px;width:26px;height:26px;background:#e6e6e6"></div></body></html>
